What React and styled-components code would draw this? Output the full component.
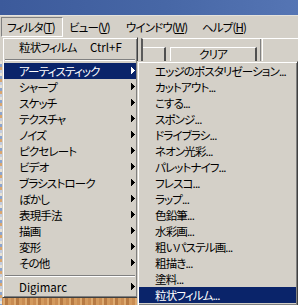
import React from 'react';
import styled, { createGlobalStyle } from 'styled-components';

const GlobalStyle = createGlobalStyle`
  html, body { margin: 0; padding: 0; background: #d4d0c8; }
  body { width: 298px; height: 305px; overflow: hidden; }
`;

const Screen = styled.div`
  position: relative;
  width: 298px;
  height: 305px;
  overflow: hidden;
  display: flex;
  flex-direction: column;
  font-family: "Noto Sans CJK JP", "Noto Sans", sans-serif;
  font-size: 11.5px;
  letter-spacing: -0.85px;
  font-feature-settings: "palt" 1;
  color: #000;
  background: #d4d0c8;
`;

const TitleStrip = styled.div`
  height: 15px;
  flex: none;
  background: linear-gradient(90deg, #3c5a9b 0%, #4767a6 55%, #5575b4 100%);
  border-bottom: 1px solid #e4e2dc;
`;

const MenuBar = styled.div`
  height: 21px;
  flex: none;
  display: flex;
  align-items: flex-start;
  padding: 1px 0 0 1px;
  box-sizing: border-box;
  background: #d4d0c8;
`;

const BarItem = styled.div`
  width: ${p => p.$w}px;
  height: 20px;
  box-sizing: border-box;
  padding-left: 5px;
  line-height: 18px;
  white-space: nowrap;
  border: 1px solid transparent;
  ${p => p.$pressed && `border-color: #808080 #ffffff #ffffff #808080;`}
  u { text-decoration: underline; text-underline-offset: 1px; }
`;

const Workspace = styled.div`
  flex: 1;
  display: flex;
  flex-direction: column;
`;

const PanelStrip = styled.div`
  height: 24px;
  flex: none;
  background: #d4d0c8;
  padding: 1px 0 0 141px;
  box-sizing: border-box;
  display: flex;
`;

const Palette = styled.div`
  flex: 1;
  display: flex;
  align-items: flex-start;
  border-top: 1px solid #ffffff;
  border-left: 2px solid #5a5a5a;
  padding-top: 8px;
`;

const Slot = styled.div`
  width: ${p => p.$w}px;
  height: 14px;
  box-sizing: border-box;
  border-top: 1px solid #ffffff;
  border-right: 2px solid #505050;
`;

const ClearButton = styled.div`
  width: 87px;
  height: 14px;
  margin-left: 4px;
  box-sizing: border-box;
  border-top: 1px solid #ffffff;
  border-left: 1px solid #ffffff;
  border-right: 2px solid #505050;
  text-align: center;
  line-height: 13px;
  overflow: hidden;
`;

const VRule = styled.div`
  width: 1px;
  align-self: stretch;
  margin-left: 3px;
  margin-top: -8px;
  border-left: 1px solid #808080;
  border-right: 1px solid #ffffff;
`;

const ImageArea = styled.div`
  flex: 1;
  background:
    repeating-linear-gradient(180deg, #e8e2d6 0 3px, #8aa4cf 3px 6px, #d9a66f 6px 9px, #c3cde0 9px 12px) left top / 2px 100% no-repeat,
    repeating-linear-gradient(90deg, #c98c52 0 3px, #ddaa70 3px 5px, #b77a43 5px 8px, #d39a5e 8px 11px);
`;

const MenuFrame = styled.div`
  position: absolute;
  left: ${p => p.$x}px;
  top: ${p => p.$y}px;
  width: ${p => p.$w}px;
  box-sizing: border-box;
  background: #d4d0c8;
  border: 1px solid;
  border-color: #d4d0c8 #404040 #404040 #d4d0c8;
  box-shadow: inset 1px 1px #ffffff, inset -1px -1px #808080;
  padding: 1px 1px 2px;
  display: flex;
  flex-direction: column;
`;

const Item = styled.div`
  position: relative;
  height: 16px;
  display: flex;
  align-items: center;
  padding-left: ${p => p.$pad}px;
  white-space: nowrap;
  line-height: 16px;
  background: ${p => (p.$active ? '#0a246a' : 'transparent')};
  color: ${p => (p.$active ? '#ffffff' : '#000000')};
`;

const Shortcut = styled.span`
  position: absolute;
  left: 86px;
  letter-spacing: 0;
`;

const Latin = styled.span`
  letter-spacing: 0;
`;

const Arrow = styled.svg`
  position: absolute;
  right: 1px;
  top: 4px;
  width: 4px;
  height: 7px;
`;

const Separator = styled.div`
  height: 8px;
  padding: 0 1px;
  display: flex;
  align-items: flex-start;
  &::before {
    content: '';
    flex: 1;
    margin-top: 4px;
    border-top: 1px solid #808080;
    border-bottom: 1px solid #ffffff;
  }
`;

const SubArrow = ({ color }) => (
  <Arrow viewBox="0 0 4 7" shapeRendering="crispEdges">
    <polygon points="0,0 4,3.5 0,7" fill={color} />
  </Arrow>
);

const mainItems = [
  'アーティスティック', 'シャープ', 'スケッチ', 'テクスチャ', 'ノイズ',
  'ピクセレート', 'ビデオ', 'ブラシストローク', 'ぼかし', '表現手法',
  '描画', '変形', 'その他',
];

const subItems = [
  'エッジのポスタリゼーション...', 'カットアウト...', 'こする...', 'スポンジ...',
  'ドライブラシ...', 'ネオン光彩...', 'パレットナイフ...', 'フレスコ...', 'ラップ...',
  '色鉛筆...', '水彩画...', '粗いパステル画...', '粗描き...', '塗料...', '粒状フィルム...',
];

export default function App() {
  return (
    <>
      <GlobalStyle />
      <Screen>
        <TitleStrip />
        <MenuBar>
          <BarItem $w={62} $pressed>フィルタ(<u>T</u>)</BarItem>
          <BarItem $w={57}>ビュー(<u>V</u>)</BarItem>
          <BarItem $w={76}>ウインドウ(<u>W</u>)</BarItem>
          <BarItem $w={50}>ヘルプ(<u>H</u>)</BarItem>
        </MenuBar>
        <Workspace>
          <PanelStrip>
            <Palette>
              <Slot $w={23} />
              <ClearButton>クリア</ClearButton>
              <VRule />
            </Palette>
          </PanelStrip>
          <ImageArea />
        </Workspace>

        <MenuFrame $x={2} $y={37} $w={136}>
          <Item $pad={15}>
            粒状フィルム
            <Shortcut>Ctrl+F</Shortcut>
          </Item>
          <Separator />
          {mainItems.map((t, i) => (
            <Item key={t} $pad={15} $active={i === 0}>
              {t}
              <SubArrow color={i === 0 ? '#ffffff' : '#000000'} />
            </Item>
          ))}
          <Separator />
          <Item $pad={15}>
            <Latin>Digimarc</Latin>
            <SubArrow color="#000000" />
          </Item>
        </MenuFrame>

        <MenuFrame $x={137} $y={61} $w={161}>
          {subItems.map((t, i) => (
            <Item key={t} $pad={16} $active={i === subItems.length - 1}>
              {t}
            </Item>
          ))}
        </MenuFrame>
      </Screen>
    </>
  );
}
